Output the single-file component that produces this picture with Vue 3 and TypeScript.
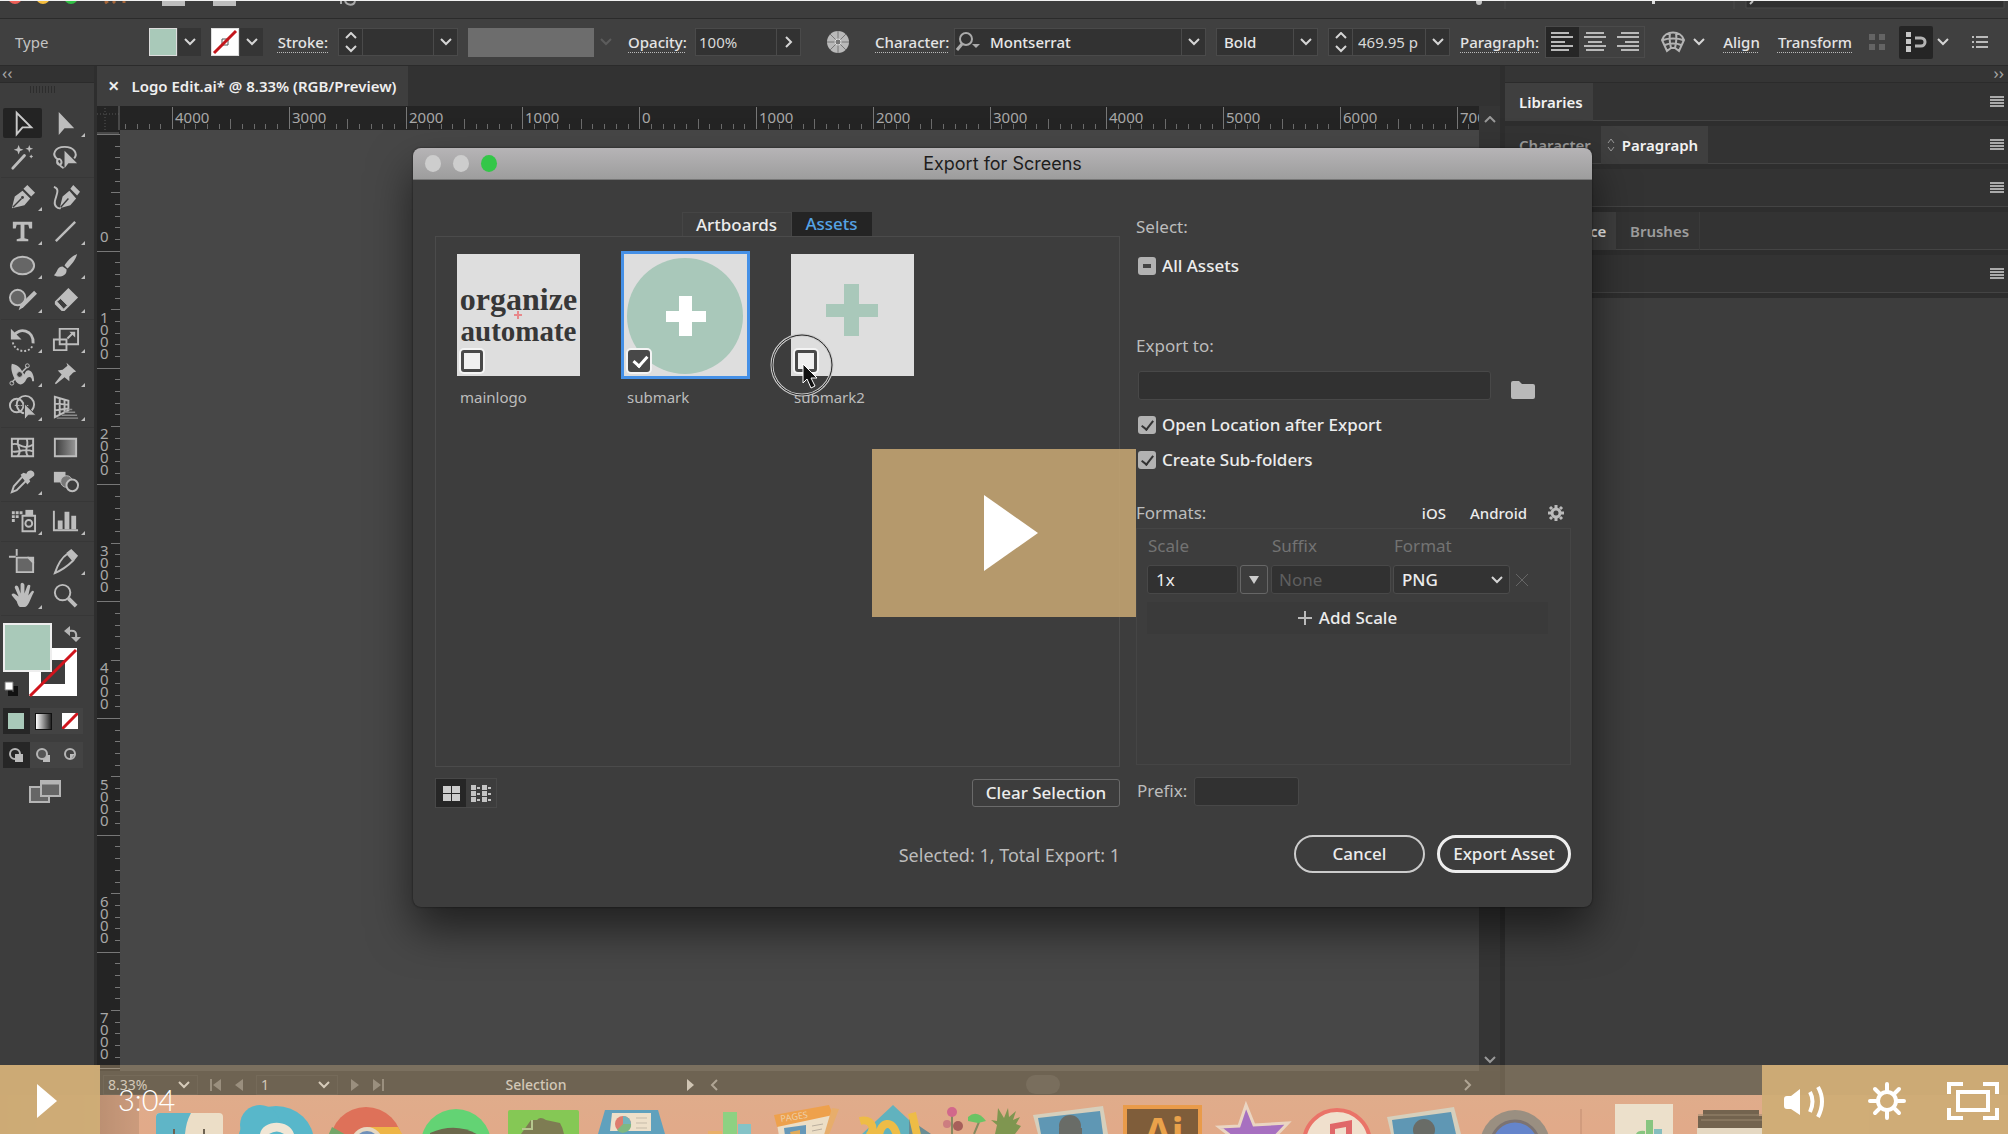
<script setup lang="ts">
import { ref } from 'vue'

interface Tool { name: string; art: string; more?: boolean; active?: boolean }

const toolGroups: Tool[][] = [
  [
    { name: 'Selection', active: true, art: '<path d="M9 4v22l6-7 9 0z" fill="none" stroke="#c9c9c9" stroke-width="2"/>' },
    { name: 'Direct selection', more: true, art: '<path d="M8 3v24l6-7 10 0z"/>' },
    { name: 'Magic wand', art: '<path d="M5 26 17 13" stroke="#bdbdbd" stroke-width="3" stroke-linecap="round"/><path d="m11 2 1.400 3.600 3.600 1.400-3.600 1.400L11 12 9.600 8.400 6 7l3.600-1.400zM22 2l1 3 3 1-3 1-1 3-1-3-3-1 3-1zM24 12l.700 1.300 1.300.700-1.300.700L24 16l-.700-1.300L22 14l1.300-.700z"/>' },
    { name: 'Lasso', art: '<path d="M7 17c-7-5-3-13 7-13s14 7 10 12M7 17c-2 4 1 7 3 5s0-7-3-5 4 8 6 9" fill="none" stroke="#bdbdbd" stroke-width="2"/><path d="M14 8v18l4-5h9z"/>' },
  ],
  [
    { name: 'Pen', more: true, art: '<path d="m4 26 3-12 8-6 8 8-6 7zM16 6l4-4 8 8-4 4z"/><path d="m5 25 9-9" stroke="#3d3d3d" stroke-width="1.500"/><circle cx="15" cy="15" r="1.500" fill="#3d3d3d"/>' },
    { name: 'Curvature', art: '<path d="M3 4c7 2 2 9 1 15-1 5 3 8 6 7" fill="none" stroke="#bdbdbd" stroke-width="2"/><path d="m9 26 3-12 7-6 7 8-6 7zM20 6l3-4 7 7-3 4z"/><path d="m10 25 8-9" stroke="#3d3d3d" stroke-width="1.500"/>' },
    { name: 'Type', more: true, art: '<path d="M5 5h20v7h-3l-1-4h-4v14l4 1v2H9v-2l4-1V8H9l-1 4H5z"/>' },
    { name: 'Line segment', more: true, art: '<path d="M5 25 25 5" stroke="#bdbdbd" stroke-width="2.500"/>' },
    { name: 'Ellipse', more: true, art: '<ellipse cx="15" cy="15" rx="12" ry="9" fill="#666" stroke="#bdbdbd" stroke-width="2"/>' },
    { name: 'Paintbrush', more: true, art: '<path d="M27 3c-5 2-11 8-13 12l3 3C21 15 26 8 27 3zM12 16c-6 0-5 6-9 9 5 3 14 1 13-6z"/>' },
    { name: 'Shaper', more: true, art: '<circle cx="10" cy="13" r="8" fill="#666" stroke="#bdbdbd" stroke-width="2"/><path d="m11 26 2-6L27 6l3 3-14 14z"/>' },
    { name: 'Eraser', more: true, art: '<path d="M18 3 28 13 14 27H11L4 20v-3z"/><path d="m6 17 7 8 4-4-7-7z" fill="#3d3d3d" stroke="#bdbdbd"/>' },
  ],
  [
    { name: 'Rotate', more: true, art: '<path d="M6 11c5-9 21-6 20 8" fill="none" stroke="#bdbdbd" stroke-width="3"/><path d="M3 4v11h11z"/><path d="M5 18c2 10 16 12 20 4" fill="none" stroke="#bdbdbd" stroke-width="2" stroke-dasharray="2 2"/>' },
    { name: 'Scale', more: true, art: '<g fill="none" stroke="#bdbdbd" stroke-width="2"><path d="M9 4h19v16H9zM3 15h13v11H3z"/><path d="m17 14 6-6"/></g><path d="M19 7h6v6z"/>' },
    { name: 'Width', more: true, art: '<path d="M4 5c9 2 9 6 13 11 2-8 10-5 10 7h-2c0-5-4-6-6-2-3 7-9 7-12 0C3 13 3 8 4 5z"/><path d="M4 24 20 8" stroke="#bdbdbd" stroke-width="1.500"/><circle cx="12" cy="16" r="3" fill="#3d3d3d" stroke="#bdbdbd"/><circle cx="20" cy="7" r="2" fill="none" stroke="#bdbdbd"/><circle cx="4" cy="25" r="2" fill="none" stroke="#bdbdbd"/>' },
    { name: 'Puppet warp', more: true, art: '<path d="m16 4 10 9-3 1-4 4v5l-5-4-9 7-1-1 7-9-4-4 5-1 5-4z"/>' },
    { name: 'Shape builder', more: true, art: '<g fill="none" stroke="#bdbdbd" stroke-width="2"><circle cx="9" cy="13" r="7"/><circle cx="18" cy="12" r="9"/></g><path d="M7 13h15" stroke="#bdbdbd" stroke-dasharray="2 1"/><path d="M17 11v17l4-5h8z" stroke="#3d3d3d"/>' },
    { name: 'Perspective grid', more: true, art: '<path d="M4 4v21l14-7V8zM4 11l14 1M4 18l14-2M9 6v17M14 7v13" fill="none" stroke="#bdbdbd" stroke-width="2"/><path d="M18 17h4M14 20h11M11 23h16M6 26h22" stroke="#8b8b8b" stroke-width="1.500"/>' },
  ],
  [
    { name: 'Mesh', art: '<path d="M4 6h22v18H4zM4 12c7-4 10 7 22 0M4 19c8 2 10-4 22 0M11 6c-4 7 5 11-1 18M19 6c4 6-4 13 2 18" fill="none" stroke="#bdbdbd" stroke-width="2"/>' },
    { name: 'Gradient', art: '<defs><linearGradient id="toolGrad"><stop stop-color="#3c3c3c"/><stop offset="1" stop-color="#999"/></linearGradient></defs><path d="M4 6h22v18H4z" fill="url(#toolGrad)" stroke="#bdbdbd" stroke-width="2"/>' },
    { name: 'Eyedropper', more: true, art: '<path d="M15 10 6 20l-2 6 5-2 10-10z" fill="none" stroke="#bdbdbd" stroke-width="2"/><path d="m13 8 3-2 3 1c2-6 10-3 8 2l-5 4 1 2-3 3z"/>' },
    { name: 'Blend', art: '<path d="M3 5h12v11H3z"/><circle cx="16" cy="15" r="6" fill="#777" stroke="#bdbdbd"/><circle cx="22" cy="19" r="6" fill="#3d3d3d" stroke="#bdbdbd" stroke-width="2"/>' },
  ],
  [
    { name: 'Symbol sprayer', more: true, art: '<path d="M15 9h13v16H15z" fill="none" stroke="#bdbdbd" stroke-width="2"/><path d="M18 3h8v6h-8z"/><circle cx="21.500" cy="17" r="3.500" fill="none" stroke="#bdbdbd" stroke-width="2"/><path d="M4 6h11M4 10h8M4 14h3" stroke="#bdbdbd" stroke-width="3" stroke-dasharray="3 1"/>' },
    { name: 'Column graph', more: true, art: '<path d="M3 4v20h25" fill="none" stroke="#bdbdbd" stroke-width="2"/><path d="M7 14h5v9H7zM14 5h5v18h-5zM21 9h5v14h-5z"/>' },
  ],
  [
    { name: 'Artboard', art: '<path d="M9 11h12l5 5v10H9z" fill="#666" stroke="#bdbdbd" stroke-width="2"/><path d="M9 2v7M1 10h7" stroke="#bdbdbd" stroke-width="2"/><path d="M20 10h7v7z"/>' },
    { name: 'Slice', more: true, art: '<path d="M4 27C7 18 11 11 17 7l6 7C17 20 11 24 4 27z" fill="none" stroke="#bdbdbd" stroke-width="2"/><path d="m16 6 5-4 7 7-4 5z"/>' },
    { name: 'Hand', more: true, art: '<path d="M9 21 4 15c-1-2 2-3 4-1l3 2L7 7c0-3 3-3 4 0l2 6V4c0-3 3-3 4 0v9l3-8c1-2 4-1 3 1l-2 9 3-4c2-2 4 0 2 2-3 6-5 14-9 14h-4c-2 0-3-3-4-6z"/>' },
    { name: 'Zoom', art: '<circle cx="12" cy="12" r="8" fill="none" stroke="#bdbdbd" stroke-width="2"/><path d="m18 18 8 8" stroke="#bdbdbd" stroke-width="4"/>' },
  ],
]

const hMajors = ['', '4000', '3000', '2000', '1000', '0', '1000', '2000', '3000', '4000', '5000', '6000', '7000']
  .map((label, i) => ({ label, x: Math.round(52 + (i - 1) * 116.8) }))
const hTicks = Array.from({ length: 125 }, (_, i) => ({ x: Math.round(-64.8 + i * 11.68), h: i % 10 === 5 ? 10 : 5 }))
const vMajors = ['', '0', '1000', '2000', '3000', '4000', '5000', '6000', '7000']
  .map((label, i) => ({ digits: label.split(''), y: Math.round(4 + i * 116.8) }))
const vTicks = Array.from({ length: 82 }, (_, i) => ({ y: Math.round(4 + i * 11.68), w: i % 10 === 5 ? 9 : 5 }))

const assets = ref([
  { id: 'mainlogo', checked: false },
  { id: 'submark', checked: true },
  { id: 'submark2', checked: false },
])
const scale = ref('1x')
const openAfter = ref(true)
const subFolders = ref(true)
</script>

<template>
  <div class="app">
    <div class="menubar">
      <svg width="400" height="17" aria-hidden="true">
        <circle cx="15" cy="-4" r="7" fill="#ee5f57" /><circle cx="43" cy="-4" r="7" fill="#f5bd3e" /><circle cx="71" cy="-4" r="7" fill="#32c146" />
        <path d="M105 2 108 0M115 2l-2-2M124 0v2" stroke="#a8673a" stroke-width="3" />
        <path d="M162 0h23v5h-23zM213 0h23v5h-23z" fill="#bdbdbd" />
        <path d="M341 0v3M345 0c2 5 9 5 10 0" fill="none" stroke="#a9a9a9" stroke-width="2" />
      </svg>
      <svg class="menu-end" width="560" height="17" aria-hidden="true">
        <circle cx="31" cy="1" r="3" fill="#c4c4c4" /><path d="M57 0v8M286 0v8" stroke="#4a4a4a" /><path d="M204 0h3v3h-3z" fill="#ddd" />
        <path d="M298 -2h258v9H298z" fill="#303030" stroke="#4b4b4b" /><path d="m302 3 3-3" stroke="#bbb" stroke-width="2" />
      </svg>
    </div>

    <header class="control">
      <span class="type-label">Type</span>
      <div class="swatch-drop">
        <button class="swatch fill" aria-label="Fill colour"></button>
        <button class="drop" aria-label="Fill options"><svg class="chev" viewBox="0 0 12 8"><path d="m1 1 5 5 5-5" /></svg></button>
      </div>
      <div class="swatch-drop">
        <button class="swatch none" aria-label="Stroke colour"><svg viewBox="0 0 26 26" width="26" height="26"><path d="M10 10h6v6h-6z" fill="none" stroke="#555" /><path d="M2 24 24 2" stroke="#c4161c" stroke-width="3" /></svg></button>
        <button class="drop" aria-label="Stroke options"><svg class="chev" viewBox="0 0 12 8"><path d="m1 1 5 5 5-5" /></svg></button>
      </div>
      <label class="link w55" for="stroke">Stroke:</label>
      <div class="combo w120">
        <span class="spin"><svg class="chev" viewBox="0 0 12 8"><path d="m1 6 5-5 5 5" /></svg><svg class="chev" viewBox="0 0 12 8"><path d="m1 1 5 5 5-5" /></svg></span>
        <input id="stroke" type="text" />
        <button class="drop" aria-label="Stroke weights"><svg class="chev" viewBox="0 0 12 8"><path d="m1 1 5 5 5-5" /></svg></button>
      </div>
      <div class="profile"><span class="bar"></span><svg class="chev dim" viewBox="0 0 12 8"><path d="m1 1 5 5 5-5" /></svg></div>
      <label class="link w57" for="opacity">Opacity:</label>
      <div class="combo w106">
        <input id="opacity" class="tight" type="text" value="100%" />
        <button class="drop" aria-label="Opacity slider"><svg width="8" height="12" viewBox="0 0 8 12" fill="none" stroke="#d5d5d5" stroke-width="2"><path d="m1 1 5 5-5 5" /></svg></button>
      </div>
      <button class="icon w54" aria-label="Recolor artwork">
        <svg width="24" height="24" viewBox="0 0 24 24"><circle cx="12" cy="12" r="11" fill="#b9b9b9" /><path d="M12 1v22M1 12h22M4 4l16 16M20 4 4 20" stroke="#777" /><circle cx="12" cy="12" r="3" fill="#777" stroke="#ddd" /></svg>
      </button>
      <label class="link w69" for="family">Character:</label>
      <div class="combo w252">
        <svg class="search" width="26" height="22" viewBox="0 0 26 22"><circle cx="10" cy="8" r="6" fill="none" stroke="#aaa" stroke-width="2" /><path d="m6 13-5 6" stroke="#aaa" stroke-width="3" /><path d="M16 13h8l-4 4z" fill="#aaa" /></svg>
        <input id="family" class="strong" type="text" value="Montserrat" />
        <button class="drop" aria-label="Font families"><svg class="chev" viewBox="0 0 12 8"><path d="m1 1 5 5 5-5" /></svg></button>
      </div>
      <div class="combo w102 sel">
        <select class="strong" aria-label="Font style"><option>Bold</option></select>
        <span class="drop over"><svg class="chev" viewBox="0 0 12 8"><path d="m1 1 5 5 5-5" /></svg></span>
      </div>
      <div class="combo w122">
        <span class="spin"><svg class="chev" viewBox="0 0 12 8"><path d="m1 6 5-5 5 5" /></svg><svg class="chev" viewBox="0 0 12 8"><path d="m1 1 5 5 5-5" /></svg></span>
        <input type="text" value="469.95 p" aria-label="Font size" />
        <button class="drop" aria-label="Font sizes"><svg class="chev" viewBox="0 0 12 8"><path d="m1 1 5 5 5-5" /></svg></button>
      </div>
      <a class="link w75" href="#paragraph">Paragraph:</a>
      <div class="aligns">
        <button class="on" aria-label="Align left"><svg width="22" height="20"><path d="M0 1h18M0 5h22M0 10h14M0 14h22M0 18h18" /></svg></button>
        <button aria-label="Align centre"><svg width="22" height="20"><path d="M2 1h18M0 5h22M4 10h14M0 14h22M2 18h18" /></svg></button>
        <button aria-label="Align right"><svg width="22" height="20"><path d="M4 1h18M0 5h22M8 10h14M0 14h22M4 18h18" /></svg></button>
      </div>
      <button class="icon warp w55" aria-label="Envelope warp">
        <svg width="24" height="22" viewBox="0 0 24 22" fill="none" stroke="#b4b4b4" stroke-width="2"><path d="M1 9C4-1 20-1 23 9l-5 11-4-3h-4l-4 3zM2 9c5-2 15-2 20 0M4 14c4-2 12-2 16 0M9 2c-1 6 0 11 1 15M15 2c1 6 0 11-1 15" /></svg>
        <svg class="chev" viewBox="0 0 12 8"><path d="m1 1 5 5 5-5" /></svg>
      </button>
      <a class="link w43" href="#align">Align</a>
      <a class="link w84" href="#transform">Transform</a>
      <svg width="20" height="20" viewBox="0 0 20 20" fill="#646464"><path d="M2 2h6v6H2zM12 2h6v6h-6zM2 12h6v6H2zM12 12h6v6h-6z" /></svg>
      <button class="icon snap" aria-label="Snap">
        <span><svg width="22" height="22" viewBox="0 0 22 22"><path d="M1 1h5v5H1zM1 8h5v5H1zM1 15h5v6H1z" fill="#c6c6c6" /><path d="M10 7h6a4 4 0 0 1 0 8h-6" fill="none" stroke="#b4b4b4" stroke-width="3" /></svg></span>
        <svg class="chev" viewBox="0 0 12 8"><path d="m1 1 5 5 5-5" /></svg>
      </button>
      <button class="icon list" aria-label="Panel options"><svg width="16" height="12" viewBox="0 0 16 12" stroke="#bbb" stroke-width="2"><path d="M0 1h2M0 6h2M0 11h2M4 1h12M4 6h12M4 11h12" /></svg></button>
    </header>

    <div class="workspace">
      <aside class="tools">
        <div class="dock-head">‹‹</div>
        <div class="grip"></div>
        <div v-for="(group, g) in toolGroups" :key="g" class="group">
          <button v-for="t in group" :key="t.name" :class="{ more: t.more, active: t.active }" :aria-label="t.name">
            <svg width="29" height="29" viewBox="0 0 30 30" fill="#bdbdbd" v-html="t.art"></svg>
          </button>
        </div>
        <svg class="colors" width="84" height="80" viewBox="0 0 84 80">
          <path d="M35 32h36v36H35z" fill="none" stroke="#fff" stroke-width="12" /><path d="M30 74 76 28" stroke="#d0141c" stroke-width="3" />
          <path d="M4 2h47v47H4z" fill="#a9c9b9" stroke="#eee" stroke-width="2" />
          <path d="M69 9c6-1 8 1 7 7" fill="none" stroke="#b5b5b5" stroke-width="2" /><path d="m70 4-6 5 6 5zM71 15h10l-5 5z" fill="#b5b5b5" />
          <path d="M10 66h6v6h-6z" fill="none" stroke="#111" stroke-width="4" /><path d="M5 60h8v8H5z" fill="#fff" stroke="#777" />
        </svg>
        <div class="modes">
          <button class="on" aria-label="Colour"><i class="m-color"></i></button>
          <button aria-label="Gradient fill"><i class="m-grad"></i></button>
          <button aria-label="None"><svg width="16" height="16"><path d="M0 0h16v16H0z" fill="#fff" /><path d="M0 16 16 0" stroke="#d0141c" stroke-width="3" /></svg></button>
        </div>
        <div class="modes">
          <button class="on" aria-label="Draw normal"><svg width="16" height="16"><circle cx="7" cy="7" r="5" fill="none" stroke="#b5b5b5" stroke-width="2" /><path d="M7 7h8v8H7z" fill="#bbb" /></svg></button>
          <button aria-label="Draw behind"><svg width="16" height="16"><path d="M8 8h7v7H8z" fill="#bbb" /><circle cx="7" cy="7" r="5" fill="#555" stroke="#b5b5b5" stroke-width="2" /></svg></button>
          <button aria-label="Draw inside"><svg width="16" height="16"><circle cx="8" cy="7" r="5" fill="none" stroke="#b5b5b5" stroke-width="2" /><path d="M8 7h4v1l-3 4H8z" fill="#bbb" /></svg></button>
        </div>
        <button class="screen" aria-label="Screen mode"><svg width="32" height="24" viewBox="0 0 32 24" fill="#666" stroke="#b5b5b5" stroke-width="2"><path d="M1 7h19v15H1z" /><path d="M12 1h19v15H12z" /><path d="M12 3h19" stroke-width="3" /></svg></button>
      </aside>

      <main class="doc">
        <div class="tabs">
          <div class="tab"><button aria-label="Close document">×</button><span>Logo Edit.ai* @ 8.33% (RGB/Preview)</span></div>
        </div>
        <div class="canvas-row">
          <svg class="vruler" aria-hidden="true">
            <path d="M0 8h22M8 2v22" stroke="#555" stroke-dasharray="1 2" />
            <path d="M22 0v24M0 27h22" stroke="#6c6c6c" />
            <g transform="translate(0 24)">
              <rect v-for="t in vTicks" :key="'t' + t.y" :x="23 - t.w" :y="t.y" :width="t.w" height="1" fill="#777" />
              <g v-for="m in vMajors" :key="m.y">
                <rect x="0" :y="m.y" width="23" height="1" fill="#777" />
                <text v-if="m.digits.length" :y="m.y - 9 - m.digits.length * 12 + 12"><tspan v-for="(d, k) in m.digits" :key="k" x="3" :dy="k ? 12 : 0">{{ d }}</tspan></text>
              </g>
            </g>
          </svg>
          <div class="canvas-col">
            <svg class="hruler" aria-hidden="true">
              <rect v-for="t in hTicks" :key="'h' + t.x" :x="t.x" :y="23 - t.h" width="1" :height="t.h" fill="#6c6c6c" />
              <g v-for="m in hMajors" :key="m.x">
                <rect :x="m.x" y="1" width="1" height="22" fill="#777" />
                <text :x="m.x + 3" y="17">{{ m.label }}</text>
              </g>
            </svg>
            <div class="canvas"></div>
          </div>
          <div class="vscroll">
            <svg class="chev" viewBox="0 0 12 8"><path d="m1 6 5-5 5 5" /></svg>
            <svg class="chev" viewBox="0 0 12 8"><path d="m1 1 5 5 5-5" /></svg>
          </div>
        </div>
        <footer class="status">
          <div class="box w95"><input type="text" value="8.33%" aria-label="Zoom level" /><svg class="chev" viewBox="0 0 12 8"><path d="m1 1 5 5 5-5" /></svg></div>
          <svg class="nav" width="36" height="14" fill="#777"><path d="M1 1h2v12H1zM12 1v12L4 7zM34 1v12L26 7z" /></svg>
          <div class="box w82"><input type="text" value="1" aria-label="Artboard" /><svg class="chev" viewBox="0 0 12 8"><path d="m1 1 5 5 5-5" /></svg></div>
          <svg class="nav" width="36" height="14" fill="#777"><path d="M2 1v12l8-6zM24 1v12l8-6zM33 1h2v12h-2z" /></svg>
          <span class="current">Selection</span>
          <svg width="10" height="14" fill="#ccc"><path d="M1 1v12l7-6z" /></svg>
          <div class="hscroll">
            <svg width="8" height="12" fill="none" stroke="#999" stroke-width="2"><path d="M7 1 2 6l5 5" /></svg>
            <i></i>
            <svg width="8" height="12" fill="none" stroke="#999" stroke-width="2"><path d="m1 1 5 5-5 5" /></svg>
          </div>
        </footer>
      </main>

      <aside class="panels">
        <div class="dock-head right">››</div>
        <div class="prow"><b class="on">Libraries</b><svg class="burger" width="14" height="12"><path d="M0 1h14M0 4h14M0 7h14M0 10h14" /></svg></div>
        <div class="prow"><b>Character</b><b class="on para"><svg width="8" height="14" fill="none" stroke="#999"><path d="m1 5 3-4 3 4M1 9l3 4 3-4" /></svg>Paragraph</b><svg class="burger" width="14" height="12"><path d="M0 1h14M0 4h14M0 7h14M0 10h14" /></svg></div>
        <div class="prow"><svg class="burger" width="14" height="12"><path d="M0 1h14M0 4h14M0 7h14M0 10h14" /></svg></div>
        <div class="prow"><b class="on appear">Appearance</b><b class="edge">Brushes</b></div>
        <div class="prow"><svg class="burger" width="14" height="12"><path d="M0 1h14M0 4h14M0 7h14M0 10h14" /></svg></div>
      </aside>
    </div>

    <div class="macdock">
      <svg width="1730" height="39" viewBox="138 1095 1730 39" aria-hidden="true">
        <defs><linearGradient id="shelf" x2="0" y2="1"><stop stop-color="#e3a48b" /><stop offset="1" stop-color="#eaa088" /></linearGradient></defs>
        <rect x="138" y="1095" width="1730" height="60" rx="6" fill="url(#shelf)" />
        <rect x="155" y="1113" width="67" height="30" rx="4" fill="#f8f3ea" /><path d="M155 1134v-17q0-4 4-4h31q-5 9-6 21z" fill="#1cb2ea" /><path d="M173 1129v5M203 1129v5" stroke="#333" stroke-width="2" />
        <ellipse cx="275" cy="1142" rx="38" ry="36" fill="#10b6ee" /><circle cx="259" cy="1125" r="20" fill="#10b6ee" /><path d="M259 1134c2-14 29-16 34 0z" fill="#fff" /><path d="M268 1134q8-5 15 0z" fill="#10b6ee" />
        <circle cx="365" cy="1143" r="36" fill="#e2483e" /><path d="M331 1127l16 9h-20z" fill="#3c9b55" /><path d="M366 1127h31l6 10h-30z" fill="#fbb220" /><circle cx="366" cy="1143" r="16" fill="#efe9e0" /><circle cx="366" cy="1143" r="12" fill="#3579d4" />
        <circle cx="455" cy="1144" r="35" fill="#22e268" /><path d="M429 1133q27-12 50 3h-50z" fill="#2f3a29" />
        <rect x="507" y="1110" width="71" height="30" rx="2" fill="#57d037" /><path d="M520 1134l10-14h6q3-4 9 0l14 3q3 5 4 11z" fill="#4c5a35" /><path d="M521 1129h10v-9" fill="none" stroke="#a3cf90" stroke-width="2" />
        <path d="M604 1110h53l7 24h-67z" fill="#1d93da" /><path d="M611 1113h39v18h-41z" fill="#fbf6ee" /><circle cx="622" cy="1124" r="8" fill="#e05c60" /><path d="M622 1124v-8a8 8 0 0 1 8 8z" fill="#3bb0d8" /><path d="M622 1124h8a8 8 0 0 1-14 6z" fill="#4eb77c" /><path d="M635 1118h11M635 1123h11M635 1128h11" stroke="#bbb" />
        <path d="M707 1131h14v5h-14z" fill="#f2ab56" /><path d="M722 1112h14v24h-14z" fill="#63df7e" /><path d="M737 1124h13v12h-13z" fill="#57c9ea" />
        <path d="M776 1124l54-12-2 24h-50z" fill="#f8f2e8" /><path d="M773 1115l55-10 4 10-56 12z" fill="#fb932a" /><path d="m831 1108 7 1-10 26h-5z" fill="#f0a65a" /><path d="M783 1128l22-3v11h-21z" fill="#2786d2" /><path d="M789 1132l10-2v5h-9z" fill="#e7a23c" /><path d="M811 1126l11-2M811 1131l10-2" stroke="#aaa" />
        <text x="780" y="1122" font-size="9" fill="#f8dfc1" transform="rotate(-9 780 1122)">PAGES</text>
        <path d="m892 1105 32 30h-64z" fill="#1eaedc" /><path d="M908 1119l25 17h-25z" fill="#2d7599" /><path d="M859 1121c10-3 17 6 9 15M878 1136c1-14 14-18 18 0M911 1113l5 22" fill="none" stroke="#fbbe20" stroke-width="8" />
        <path d="M951 1113v21M978 1122l-5 12" stroke="#56704a" stroke-width="2" /><circle cx="951" cy="1112" r="5" fill="#cf3a8c" /><circle cx="946" cy="1124" r="4" fill="#c75b7b" /><circle cx="957" cy="1126" r="5" fill="#8c2d3f" /><path d="M967 1117q9-8 18 4l-8 2-10-2z" fill="#2cc94f" /><path d="m994 1134 2-9-6-5 6 1 1-13 6 10 4-10 1 9 7-6-3 9 7-3-4 7 5 2-6 8z" fill="#4d8230" />
        <path d="M1032 1115l70-9 5 28h-70z" fill="#d5dbd8" /><path d="M1037 1118l62-7 3 23h-62z" fill="#1c84cc" /><circle cx="1069" cy="1126" r="11" fill="#2b4054" /><path d="M1058 1128h23v6h-23z" fill="#2b4054" />
        <rect x="1124" y="1107" width="75" height="40" fill="#4e290e" stroke="#f28a26" stroke-width="4" /><text x="1143" y="1146" font-size="40" font-weight="700" fill="#f49527">Ai</text>
        <path d="m1245 1105 8 20 34-2-19 20h-50l9-9-9-7 20-1z" fill="#8b47df" stroke="#f4e5e2" stroke-width="3" />
        <circle cx="1336" cy="1143" r="33" fill="#fdf6f2" stroke="#f54c55" stroke-width="4" /><path d="M1329 1134v-10l22-4v14h-6v-7l-11 2v5z" fill="#e43b56" />
        <path d="M1386 1117l67-10 7 27h-70z" fill="#d5dbd8" /><path d="M1391 1120l59-8 5 22h-62z" fill="#1c84cc" /><circle cx="1423" cy="1130" r="11" fill="#2b4054" />
        <circle cx="1514" cy="1145" r="35" fill="#77787c" /><circle cx="1514" cy="1145" r="24" fill="#2468f0" stroke="#484c65" stroke-width="3" />
        <path d="M1580 1109v25" stroke="#b67465" /><path d="M1614 1104h58v30h-58z" fill="#f8f6ef" /><path d="M1635 1134q2-4 9-3v3zM1645 1120h7v14h-7z" fill="#5ccc7b" /><path d="M1653 1129h8v5h-8z" fill="#57c1dd" />
        <path d="M1702 1110h56v8h-56zM1697 1116h64v14h-64z" fill="#3a332c" /><path d="M1697 1115h65M1700 1120h61" stroke="#776d60" /><path d="M1696 1128h67v6h-67z" fill="#ede9e2" />
      </svg>
    </div>

    <div class="stage">
      <section class="dialog" role="dialog" aria-label="Export for Screens">
        <div class="titlebar"><span class="lights"><i></i><i></i><i class="green"></i></span><span>Export for Screens</span></div>
        <div class="body">
          <div class="left">
            <div class="dtabs"><button>Artboards</button><button class="on">Assets</button></div>
            <div class="preview">
              <label v-for="a in assets" :key="a.id" class="asset" :class="{ picked: a.checked }">
                <span class="thumb">
                  <span v-if="a.id === 'mainlogo'" class="logo"><span class="wide">organize</span><svg width="8" height="8" stroke="#e8888b" stroke-width="2"><path d="M4 0v8M0 4h8" /></svg><span>automate</span></span>
                  <svg v-else-if="a.id === 'submark'" width="119" height="119" viewBox="0 0 119 119"><circle cx="59" cy="60" r="58" fill="#a9c8ba" /><path d="M40 55h13V40h13v15h14v11H66v14H53V66H40z" fill="#fff" /></svg>
                  <svg v-else width="119" height="119" viewBox="0 0 119 119"><path d="M33 48h18V28h15v20h19v13H66v19H51V61H33z" fill="#a9c8ba" /></svg>
                  <input v-model="a.checked" type="checkbox" />
                </span>
                <span>{{ a.id }}</span>
              </label>
              <svg class="pointer" width="64" height="64" viewBox="0 0 64 64" aria-hidden="true">
                <circle cx="32" cy="32" r="30" fill="none" stroke="#ccc" stroke-width="3" /><circle cx="32" cy="32" r="30" fill="none" stroke="#222" stroke-width="1" />
                <path d="M33 31v19l4-4 4 9 4-2-4-8h6z" fill="#111" stroke="#fff" />
              </svg>
            </div>
            <div class="under">
              <div class="views">
                <button class="on" aria-label="Large thumbnails"><svg width="17" height="17" fill="#ccc"><path d="M0 1h8v7H0zM9 1h8v7H9zM0 9h8v7H0zM9 9h8v7H9z" /></svg></button>
                <button aria-label="Small thumbnails"><svg width="20" height="17" fill="#c4c4c4"><path d="M0 0h5v5H0zM11 0h5v5h-5zM0 6h5v5H0zM11 6h5v5h-5zM0 12h5v5H0zM11 12h5v5h-5zM6 2h3v2H6zM17 2h3v2h-3zM6 8h3v2H6zM17 8h3v2h-3zM6 14h3v2H6zM17 14h3v2h-3z" /></svg></button>
              </div>
              <button class="clear">Clear Selection</button>
            </div>
            <p class="count">Selected: 1, Total Export: 1</p>
          </div>

          <div class="right">
            <p class="lab">Select:</p>
            <label class="check all"><input type="checkbox" class="mixed" />All Assets</label>
            <label class="lab" for="dest">Export to:</label>
            <div class="dest"><input id="dest" type="text" /><button aria-label="Choose folder"><svg width="24" height="18"><path d="M0 2q0-2 2-2h6l3 3h11q2 0 2 2v11q0 2-2 2H2q-2 0-2-2z" fill="#b9b9b9" /></svg></button></div>
            <label class="check"><input v-model="openAfter" type="checkbox" />Open Location after Export</label>
            <label class="check"><input v-model="subFolders" type="checkbox" />Create Sub-folders</label>
            <div class="fhead"><span class="lab">Formats:</span><button>iOS</button><button>Android</button>
              <button class="gear" aria-label="Format settings"><svg width="16" height="16" viewBox="0 0 16 16"><circle cx="8" cy="8" r="4" fill="none" stroke="#bbb" stroke-width="3" /><path d="M8 0v3M8 13v3M0 8h3M13 8h3M2 2l2 2M12 12l2 2M14 2l-2 2M4 12l-2 2" stroke="#bbb" stroke-width="3" /></svg></button>
            </div>
            <div class="formats">
              <div class="cols head"><label for="scale">Scale</label><label for="suffix">Suffix</label><label for="format">Format</label></div>
              <div class="cols">
                <span class="scale"><input id="scale" v-model="scale" type="text" /><button aria-label="Scale presets"><svg width="10" height="10" fill="#ccc"><path d="M0 1h10L5 9z" /></svg></button></span>
                <input id="suffix" type="text" placeholder="None" />
                <span class="fmt"><select id="format"><option>PNG</option></select><svg class="chev" viewBox="0 0 12 8"><path d="m1 1 5 5 5-5" /></svg></span>
                <button class="x" aria-label="Remove"><svg width="14" height="14" stroke="#666"><path d="m1 1 12 12M13 1 1 13" /></svg></button>
              </div>
              <button class="add"><svg width="14" height="14" stroke="#bbb" stroke-width="2"><path d="M7 0v14M0 7h14" /></svg>Add Scale</button>
            </div>
            <div class="prefix"><label class="lab" for="prefix">Prefix:</label><input id="prefix" type="text" /></div>
            <div class="actions"><button>Cancel</button><button class="primary">Export Asset</button></div>
          </div>
        </div>
      </section>
      <button class="bigplay" aria-label="Play video"><svg width="54" height="76"><path d="M0 0v76l54-38z" fill="#fff" /></svg></button>
    </div>

    <div class="player">
      <button class="solid play" aria-label="Play"><svg width="20" height="34"><path d="M0 0v34l20-17z" fill="#fff" /></svg></button>
      <span class="time">3:04</span>
      <div class="solid tray">
        <button aria-label="Volume"><svg width="42" height="34" viewBox="0 0 42 34"><path d="M0 13q0-3 3-3h4l9-7v26l-9-6H3q-3 0-3-3z" fill="#fff" transform="translate(0 2)" /><path d="M26 8q5 9 0 20M34 3q8 14 0 30" fill="none" stroke="#fff" stroke-width="4" /></svg></button>
        <button aria-label="Settings"><svg width="38" height="38" viewBox="0 0 38 38" fill="none" stroke="#fff" stroke-width="4"><circle cx="19" cy="19" r="9" /><path d="M19 2v7M19 29v7M2 19h7M29 19h7M7 7l5 5M26 26l5 5M31 7l-5 5M12 26l-5 5" stroke-linecap="round" /></svg></button>
        <button aria-label="Fullscreen"><svg width="52" height="38" viewBox="0 0 52 38" fill="none" stroke="#fff" stroke-width="4"><path d="M11 10h30v18H11z" /><path d="M2 12V2h14M36 2h14v10M50 26v10H36M16 36H2V26" /></svg></button>
      </div>
    </div>
  </div>
</template>

<style>
body { margin: 0; background: #3d3d3d; }
</style>

<style scoped>
* { box-sizing: border-box; }
.app { position: relative; min-height: 100vh; display: flex; flex-direction: column; overflow: hidden; background: #3d3d3d; color: #d8d8d8; font: 15px/20px "Noto Sans", "Open Sans", sans-serif; }
button, input, select { font: inherit; color: inherit; background: none; border: 0; padding: 0; margin: 0; border-radius: 0; min-width: 0; outline: 0; }
button { display: inline-flex; align-items: center; justify-content: center; cursor: pointer; }
p { margin: 0; }
svg { display: block; flex: none; }
.chev { width: 12px; height: 8px; fill: none; stroke: #d5d5d5; stroke-width: 2; }
.chev.dim { stroke: #5c5c5c; }

.menubar { height: 18px; border-top: 1px solid #f2f2f2; display: flex; justify-content: space-between; overflow: hidden; }
.control { height: 48px; flex: none; border-top: 1px solid #2b2b2b; border-bottom: 1px solid #2b2b2b; display: flex; align-items: center; gap: 10px; padding: 0 20px 0 15px; background: #404040; white-space: nowrap; }
.control > * { flex: none; }
.type-label { width: 124px; color: #c4c4c4; }
.swatch-drop { display: flex; width: 52px; height: 28px; }
.swatch { width: 28px; border: 1px solid #ddd; flex: none; }
.swatch.fill { background: #a9c9b9; }
.swatch.none { background: #fff; }
.drop { width: 24px; flex: none; display: flex; align-items: center; justify-content: center; border-left: 1px solid #4a4a4a; align-self: stretch; }
.swatch-drop .drop { background: #353535; }
.link { color: #e4e4e4; font-weight: 500; text-align: right; text-decoration: underline dotted 1px #bbb; text-underline-offset: 4px; }
a.link { text-align: center; }
.w43 { width: 43px; } .w54 { width: 54px; } .w55 { width: 55px; } .w57 { width: 57px; } .w69 { width: 69px; } .w75 { width: 75px; } .w84 { width: 84px; }
.w102 { width: 102px; } .w106 { width: 106px; } .w120 { width: 120px; } .w122 { width: 122px; } .w252 { width: 252px; }
.combo { position: relative; display: flex; align-items: center; height: 28px; background: #323232; border: 1px solid #4a4a4a; }
.combo input { flex: 1; width: 0; padding-left: 5px; height: 26px; }
.combo input.strong { padding-left: 8px; }
.combo input.tight { padding-left: 3px; }
.combo select { flex: 1; appearance: none; padding-left: 7px; height: 26px; }
.strong { font-weight: 500; color: #e8e8e8; }
.over { position: absolute; right: 0; top: 0; bottom: 0; pointer-events: none; }
.spin { width: 24px; height: 26px; display: flex; flex-direction: column; justify-content: space-around; align-items: center; border-right: 1px solid #4a4a4a; }
.search { margin-left: 1px; }
.profile { width: 150px; display: flex; align-items: center; gap: 6px; }
.profile .bar { width: 126px; height: 29px; background: #6d6d6d; }
.aligns { display: flex; width: 100px; height: 32px; border: 1px solid #4b4b4b; }
.aligns button { flex: 1; }
.aligns svg { stroke: #b9b9b9; stroke-width: 2; }
.on { background: #262626; }
.warp { gap: 8px; }
.snap { width: 54px; gap: 4px; }
.snap span { width: 34px; height: 33px; background: #252525; display: flex; align-items: center; justify-content: center; border-radius: 2px; }
.list { margin-left: auto; }

.workspace { flex: 1; display: flex; min-height: 0; }
.dock-head { height: 17px; background: #323232; color: #a5a5a5; font-size: 17px; line-height: 14px; padding-left: 2px; border-bottom: 1px solid #2b2b2b; }
.dock-head.right { text-align: right; padding-right: 4px; background: #353535; }
.tools { width: 97px; flex: none; border-right: 3px solid #2e2e2e; }
.grip { width: 27px; height: 7px; margin: 3px 0 13px 30px; background: repeating-linear-gradient(90deg, #2d2d2d 0 1px, #3d3d3d 1px 3px); }
.group { display: grid; grid-template-columns: 43px 43px; margin-left: 1px; padding-bottom: 3px; margin-bottom: 2px; border-bottom: 1px solid #373737; }
.group button { position: relative; height: 34px; border: 2px solid #3d3d3d; }
.group button.active { background: #232323; border-radius: 4px; }
.group button.more::after { content: ""; position: absolute; right: 0; bottom: 1px; border: 2px solid; border-color: transparent #bdbdbd #bdbdbd transparent; }
.colors { margin: 6px 0; }
.modes { display: flex; width: 80px; height: 26px; margin: 0 0 8px 3px; background: #434343; }
.modes button { flex: 1; }
.m-color { width: 16px; height: 16px; background: #a9c9b9; }
.m-grad { width: 17px; height: 17px; border: 1px solid #111; background: linear-gradient(90deg, #fff, #222); }
.screen { margin: 4px 0 0 29px; }

.doc { flex: 1; min-width: 0; display: flex; flex-direction: column; }
.tabs { height: 40px; background: #323232; display: flex; flex: none; }
.tab { display: flex; align-items: center; gap: 12px; padding: 0 12px 0 11px; background: #3e3e3e; font-weight: 600; font-size: 15px; color: #efefef; white-space: nowrap; }
.tab button { font-size: 20px; }
.canvas-row { flex: 1; display: flex; min-height: 0; }
.vruler { width: 23px; height: auto; background: #242424; align-self: stretch; overflow: hidden; }
.vruler text, .hruler text { fill: #a8a8a8; font-size: 15px; }
.canvas-col { flex: 1; min-width: 0; display: flex; flex-direction: column; }
.hruler { width: 100%; height: 24px; background: #242424; overflow: hidden; }
.canvas { flex: 1; background: #474747; }
.vscroll { width: 21px; background: #353535; display: flex; flex-direction: column; justify-content: space-between; align-items: center; padding: 10px 0 7px; }
.vscroll .chev { stroke: #999; }
.status { height: 24px; flex: none; background: #333; display: flex; align-items: center; padding: 3px 0 0 6px; font-size: 14px; color: #d0d0d0; }
.box { display: flex; align-items: center; height: 20px; padding-right: 7px; border: 1px solid #3e3e3e; }
.box input { flex: 1; width: 0; padding-left: 4px; }
.w95 { width: 95px; } .w82 { width: 82px; }
.nav { margin: 0 11px; }
.current { width: 290px; padding-right: 10px; text-align: center; font-weight: 500; }
.hscroll { flex: 1; display: flex; align-items: center; justify-content: space-between; padding: 0 28px 0 14px; }
.hscroll i { width: 34px; height: 19px; border-radius: 10px; background: #444; margin-right: 96px; }

.panels { width: 508px; flex: none; border-left: 5px solid #2e2e2e; white-space: nowrap; }
.prow { height: 43px; display: flex; background: #333; border-bottom: 5px solid #2e2e2e; box-shadow: inset 0 -1px #444; color: #9d9d9d; }
.prow b { display: flex; align-items: center; padding: 0 10px 0 14px; font-weight: 600; }
.prow b.on { background: #3f3f3f; color: #f2f2f2; }
.prow b.para { gap: 7px; padding: 0 10px 0 6px; }
.prow b.appear { width: 111px; }
.prow b.edge { border-right: 1px solid #3a3a3a; }
.burger { margin: auto 4px auto auto; stroke: #aaa; stroke-width: 2; }

.macdock { flex: none; height: 39px; display: flex; justify-content: center; overflow: hidden; background: linear-gradient(90deg, #6e4b3c, #c48a75 138px, #c48a75); font-family: "Open Sans", sans-serif; }

.stage { position: absolute; inset: 0 0 69px; display: flex; justify-content: center; align-items: flex-start; padding: 148px 3px 0 0; }
.dialog { width: 1179px; max-width: 96vw; background: #3d3d3d; border-radius: 8px; overflow: hidden; box-shadow: 0 22px 44px rgba(0, 0, 0, .55), 0 0 2px #1a1a1a; font-size: 17px; line-height: 24px; color: #ececec; }
.titlebar { position: relative; height: 32px; display: flex; align-items: center; justify-content: center; background: linear-gradient(#b6b4b6, #9d9d9d); color: #1d1d1d; font-family: Inter, sans-serif; font-size: 18px; border-bottom: 1px solid #777; }
.lights { position: absolute; left: 12px; display: flex; gap: 12px; }
.lights i { width: 16px; height: 17px; border-radius: 50%; background: #cdcdcd; }
.lights i.green { background: #33c748; }
.body { display: grid; grid-template-columns: 685px 1fr; gap: 16px; padding: 32px 21px 34px 22px; }
.left { display: flex; flex-direction: column; }
.dtabs { display: flex; justify-content: center; height: 24px; padding-right: 2px; }
.dtabs button { width: 80px; font-weight: 500; }
.dtabs button:first-child { width: 110px; border: 1px solid #454545; border-bottom: 0; }
.dtabs .on { color: #55a3e6; background: #242424; }
.preview { position: relative; height: 531px; border: 1px solid #4b4b4b; display: flex; align-items: flex-start; gap: 38px; padding: 14px 18px; }
.asset { width: 129px; display: flex; flex-direction: column; color: #bcbcbc; font-size: 15px; }
.asset > span:last-child { margin: 6px 0 0 6px; }
.thumb { position: relative; width: 129px; height: 128px; border: 3px solid transparent; background: #dedede padding-box; display: flex; align-items: center; justify-content: center; }
.picked .thumb { border-color: #4590e6; background-clip: border-box; }
.thumb input { position: absolute; left: 4px; bottom: 4px; width: 22px; height: 22px; appearance: none; border: 3px solid #484848; border-radius: 3px; background: #efefef; box-shadow: 0 0 0 2px #f4f4f4; }
.thumb input:checked { background: #484848; }
.thumb input:checked::after { content: ""; position: absolute; left: 5px; top: 0; width: 6px; height: 11px; border: solid #fff; border-width: 0 3px 3px 0; transform: rotate(42deg); }
.logo { display: flex; flex-direction: column; align-items: center; color: #373737; font: bold 29px/24px "Liberation Serif", serif; }
.logo .wide { font-size: 32px; }
.pointer { position: absolute; left: 334px; top: 96px; }
.under { display: flex; justify-content: space-between; align-items: center; height: 52px; }
.views { display: flex; border: 1px solid #484848; height: 30px; }
.views button { width: 30px; }
.clear { width: 148px; height: 28px; border: 1px solid #6a6a6a; border-radius: 3px; font-weight: 500; }
.count { text-align: right; color: #bcbcbc; margin-top: 24px; font-size: 18px; }
.right { display: flex; flex-direction: column; }
.lab { color: #bcbcbc; }
p.lab { margin-top: 3px; }
.check { display: flex; align-items: center; gap: 6px; padding-left: 2px; height: 24px; margin-bottom: 11px; font-weight: 500; }
.check.all { margin: 15px 0 56px; }
.check input { appearance: none; position: relative; width: 18px; height: 18px; border-radius: 3px; background: #b2b2b2; }
.check input:checked::after { content: ""; position: absolute; left: 6px; top: 2px; width: 5px; height: 10px; border: solid #333; border-width: 0 2px 2px 0; transform: rotate(38deg); }
.check .mixed::after { content: ""; position: absolute; left: 5px; top: 7px; width: 8px; height: 4px; background: #444; }
.dest { display: flex; align-items: center; gap: 20px; margin: 13px 0 13px 2px; }
.dest input, .prefix input, .formats input { background: #313131; border: 1px solid #484848; border-radius: 3px; height: 29px; }
.dest input { width: 353px; }
.dest button { padding-top: 8px; }
.fhead { display: flex; align-items: center; height: 30px; margin-top: 15px; }
.fhead button { font-size: 15px; font-weight: 500; margin-right: 24px; }
.fhead .lab { margin-right: auto; }
.fhead .gear { margin: 0 7px 0 -3px; }
.formats { height: 237px; border: 1px solid #454545; padding: 4px 22px 0 10px; }
.cols { display: grid; grid-template-columns: 122px 120px 117px 14px; gap: 2px; align-items: center; height: 29px; }
.cols:not(.head) > .x { margin-left: 6px; }
.cols.head { height: 26px; margin-bottom: 6px; color: #737373; padding-left: 1px; }
.scale { display: flex; gap: 2px; }
.formats .scale input { width: 91px; padding-left: 8px; }
.formats #suffix { padding-left: 7px; width: 120px; }
.formats #suffix::placeholder { color: #5f5f5f; opacity: 1; }
.scale button { width: 28px; height: 29px; border: 1px solid #666; border-radius: 3px; }
.fmt { position: relative; display: flex; }
.fmt select { appearance: none; width: 117px; height: 29px; padding-left: 8px; font-weight: 500; background: #333; border: 1px solid #4c4c4c; border-radius: 3px; }
.fmt .chev { position: absolute; right: 7px; top: 11px; pointer-events: none; }
.add { width: 100%; height: 32px; margin-top: 8px; gap: 7px; background: #3a3a3a; font-weight: 500; }
.prefix { display: flex; align-items: center; gap: 7px; height: 52px; padding-left: 1px; }
.prefix input { width: 105px; }
.actions { display: flex; justify-content: flex-end; gap: 12px; margin-top: 18px; }
.actions button { width: 131px; height: 38px; border: 2px solid #ccc; border-radius: 19px; font-weight: 500; white-space: nowrap; }
.actions .primary { width: 134px; border: 3px solid #eee; }
.bigplay { position: absolute; left: 50%; top: 50%; width: 264px; height: 168px; margin: -84px 0 0 -132px; padding-left: 14px; background: rgba(204, 170, 117, .84); }

.player { position: absolute; left: 0; right: 0; bottom: 0; height: 69px; display: flex; align-items: center; background: rgba(216, 186, 139, .36); }
.solid { background: rgba(207, 173, 119, .96); height: 69px; }
.play { width: 100px; padding: 2px 7px 0 0; }
.time { margin: 0 auto 0 18px; color: #fff; font: 300 29px/34px Lato, sans-serif; }
.tray { width: 246px; display: flex; justify-content: space-between; align-items: center; padding: 3px 9px 0 22px; }
</style>
